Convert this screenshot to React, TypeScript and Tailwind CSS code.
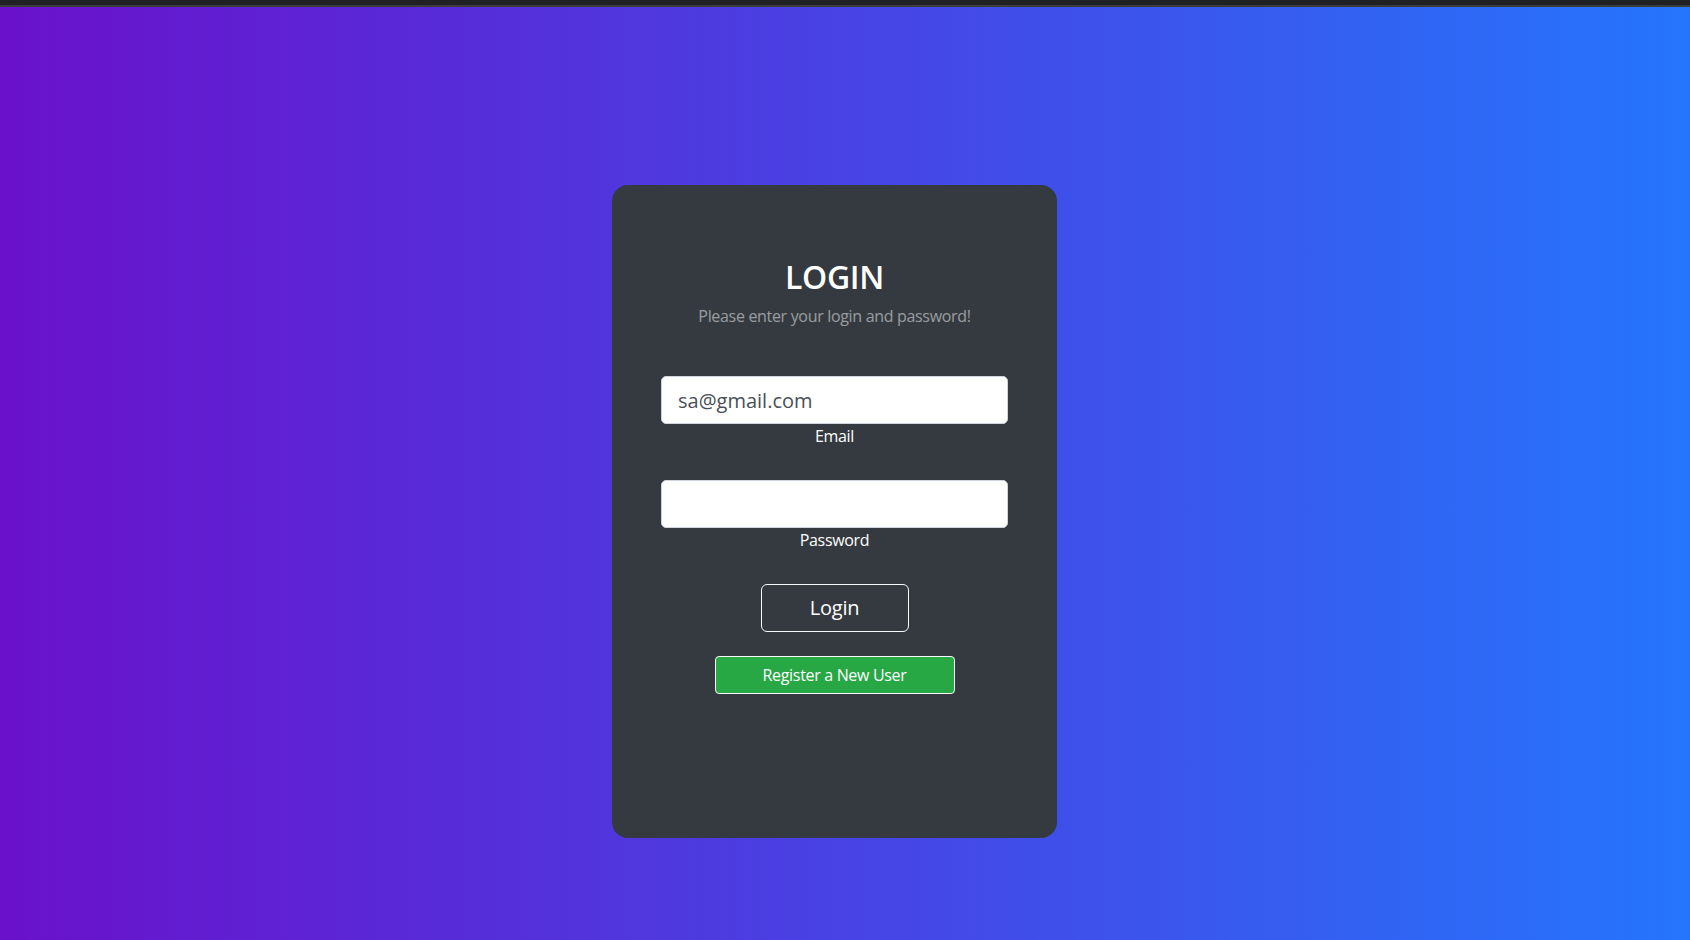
export default function App() {
  return (
    <div
      className="min-h-screen w-full bg-[linear-gradient(to_right,#6a11cb,#2575fc)]"
      style={{ fontFamily: '"Open Sans", "Noto Sans", Arial, sans-serif' }}
    >
      <div className="h-[5px] w-full bg-[#202124]" />
      <div className="h-[2px] w-full bg-[#3c3c3c]" />

      <section className="flex justify-center pt-[178px] pr-[21px] pb-[102px]">
        <div className="flex h-[653px] w-[445px] flex-col items-center rounded-[16px] bg-[#343a40] px-[49px] pt-[73px] text-center">
          <h2 className="text-[32px] leading-[38px] font-semibold tracking-[-0.01em] text-white uppercase">
            Login
          </h2>
          <p className="mt-2 text-[16px] leading-6 tracking-[-0.02em] text-white/50">
            Please enter your login and password!
          </p>

          <form className="mt-12 flex w-full flex-col items-center" onSubmit={(e) => e.preventDefault()}>
            <div className="w-full">
              <input
                type="email"
                defaultValue="sa@gmail.com"
                className="block h-12 w-full rounded-[5px] border border-[#ced4da] bg-white px-4 text-[20px] text-[#495057] outline-none"
              />
              <label className="block text-[16px] leading-6 tracking-[-0.02em] text-white">Email</label>
            </div>

            <div className="mt-8 w-full">
              <input
                type="password"
                className="block h-12 w-full rounded-[5px] border border-[#ced4da] bg-white px-4 text-[20px] text-[#495057] outline-none"
              />
              <label className="block text-[16px] leading-6 tracking-[-0.02em] text-white">Password</label>
            </div>

            <button
              type="submit"
              className="mt-8 h-12 w-[148px] rounded-[6px] border border-[#f8f9fa] text-[20px] tracking-[-0.01em] text-white"
            >
              Login
            </button>

            <button
              type="button"
              className="mt-6 h-[38px] w-[240px] rounded-[4px] border border-[#f8f9fa] bg-[#28a745] text-[16px] tracking-[-0.02em] text-white"
            >
              Register a New User
            </button>
          </form>
        </div>
      </section>
    </div>
  );
}
